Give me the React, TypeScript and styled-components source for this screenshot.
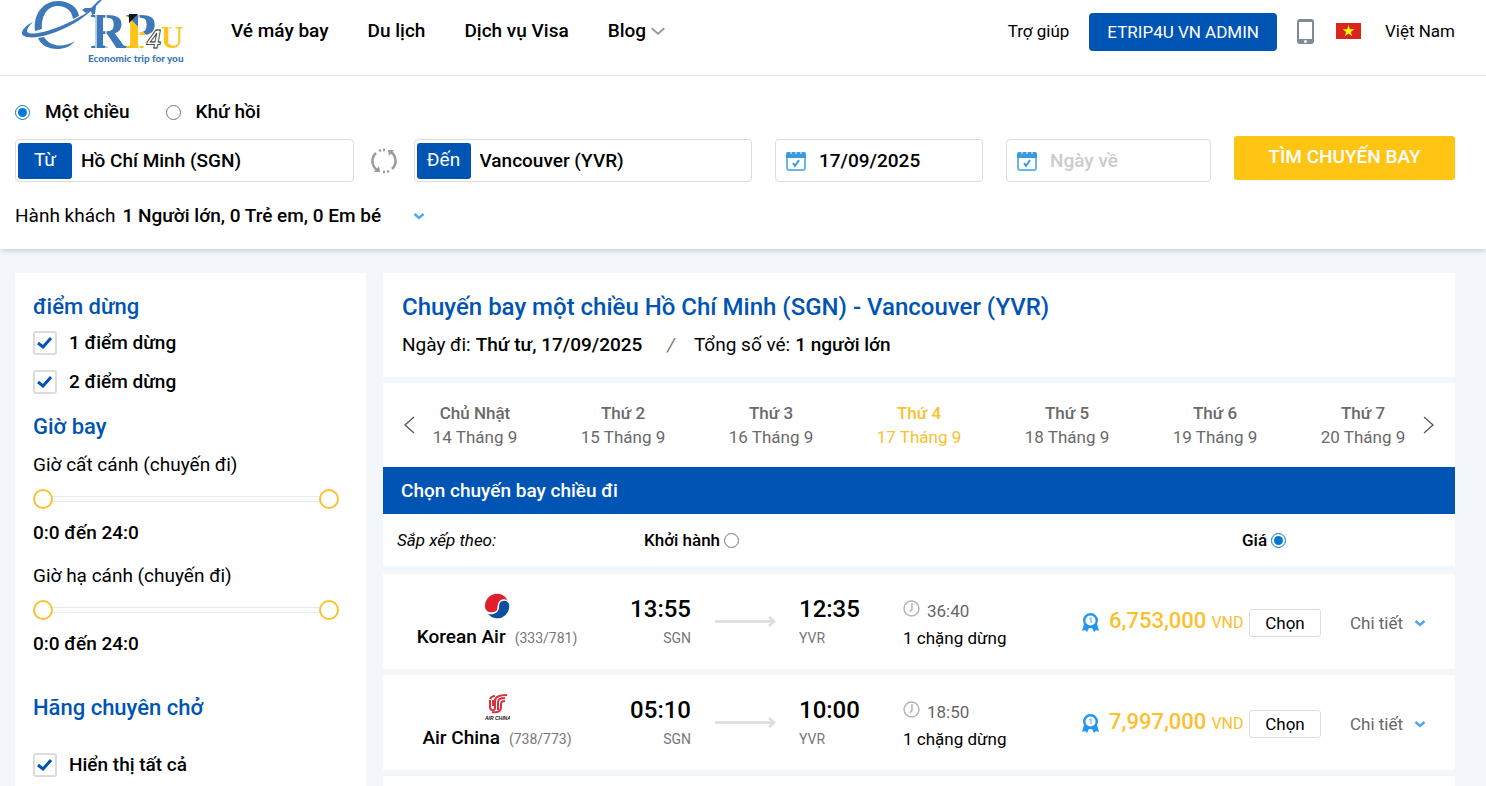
import React, { useState } from 'react';
import styled, { createGlobalStyle } from 'styled-components';

const blue = '#0054b4';
const yellow = '#ffc414';
const lineGrey = '#dcdcdc';

const GlobalStyle = createGlobalStyle`
  *, *::before, *::after { box-sizing: border-box; }
  body {
    margin: 0;
    background: #f3f7fc;
    color: #000;
    font-family: Roboto, "Open Sans", sans-serif;
    font-size: 18px;
    line-height: 24px;
  }
  button, input { font: inherit; color: inherit; }
  button { cursor: pointer; }
  svg { display: block; flex: none; }
  h1, h2, p, ul { margin: 0; padding: 0; font-weight: 400; }
`;

const Header = styled.header`
  display: flex;
  align-items: flex-start;
  height: 76px;
  padding: 0 31px 0 22px;
  background: #fff;
  border-bottom: 1px solid #e6e6e6;
  overflow: hidden;
`;

const Nav = styled.nav`
  display: flex;
  gap: 39px;
  margin-left: 44px;
  padding-top: 19px;
`;

const NavLink = styled.a`
  display: flex;
  align-items: center;
  gap: 5px;
  color: #000;
  font-size: 19px;
  font-weight: 500;
  text-decoration: none;
  white-space: nowrap;
`;

const HeaderTools = styled.div`
  display: flex;
  align-items: center;
  margin-left: auto;
  padding-top: 13px;
  font-size: 17px;
  white-space: nowrap;
`;

const HelpLink = styled.a`
  margin-right: 20px;
  padding-bottom: 3px;
  color: #000;
  text-decoration: none;
`;

const AdminButton = styled.button`
  height: 38px;
  padding: 0 18px;
  border: 0;
  border-radius: 4px;
  background: ${blue};
  color: #fff;
  margin-right: 20px;
`;

const LanguageButton = styled.button`
  display: flex;
  align-items: center;
  gap: 24px;
  margin-left: 22px;
  padding: 0 0 2px;
  border: 0;
  background: none;
`;

const SearchPanel = styled.form`
  padding: 24px 31px 21px 15px;
  background: #fff;
  box-shadow: 0 3px 5px -1px rgba(0, 0, 0, 0.17);
`;

const TripTypes = styled.div`
  display: flex;
  gap: 36px;
  height: 24px;
  margin-bottom: 12px;
`;

const TripType = styled.label`
  display: flex;
  align-items: center;
  gap: 15px;
  font-size: 19px;
  font-weight: 500;
`;

const Radio = styled.input.attrs({ type: 'radio' })`
  width: 15px;
  height: 15px;
  margin: 0;
  accent-color: #0078d4;
`;

const SearchRow = styled.div`
  display: grid;
  grid-template-columns: minmax(0, 737fr) minmax(0, 208fr) minmax(0, 205fr) minmax(0, 221fr);
  gap: 23px;
`;

const Route = styled.div`
  display: grid;
  grid-template-columns: minmax(0, 1fr) 60px minmax(0, 1fr);
  align-items: center;
`;

const Field = styled.label`
  display: flex;
  align-items: center;
  height: 43px;
  margin-top: 3px;
  padding: 2px;
  border: 1px solid ${lineGrey};
  border-radius: 4px;
  background: #fff;
`;

const FieldTag = styled.span`
  flex: none;
  width: 54px;
  height: 36px;
  border-radius: 3px;
  background: ${blue};
  color: #fff;
  font-size: 19px;
  line-height: 34px;
  text-align: center;
`;

const FieldInput = styled.input`
  flex: 1;
  min-width: 0;
  padding: 0 0 0 9px;
  border: 0;
  outline: 0;
  background: none;
  font-size: 19px;
  font-weight: 500;
  &::placeholder { color: #ccc; }
`;

const DateField = styled(Field)`
  padding-left: 10px;
  ${FieldInput} { padding-left: 13px; }
`;

const SwapButton = styled.button`
  justify-self: center;
  margin-top: 3px;
  padding: 0;
  border: 0;
  background: none;
`;

const SearchButton = styled.button`
  height: 44px;
  padding: 0 0 2px;
  border: 0;
  border-radius: 3px;
  background: ${yellow};
  color: #fff;
  font-size: 19px;
  font-weight: 500;
  white-space: nowrap;
`;

const PassengerButton = styled.button`
  display: flex;
  align-items: center;
  gap: 7px;
  margin-top: 22px;
  padding: 0;
  border: 0;
  background: none;
  font-size: 19px;
  b { font-weight: 500; margin-right: 26px; }
`;

const Content = styled.main`
  display: grid;
  grid-template-columns: 351fr 1072fr;
  gap: 17px;
  padding: 24px 31px 0 15px;
`;

const Sidebar = styled.aside`
  padding: 18px 27px 24px 18px;
  background: #fff;
`;

const FilterTitle = styled.h2<{ $space?: number }>`
  margin-top: ${(p) => p.$space ?? 0}px;
  color: ${blue};
  font-size: 22px;
  font-weight: 500;
  line-height: 32px;
`;

const CheckRow = styled.label`
  display: flex;
  align-items: center;
  gap: 12px;
  height: 39px;
  font-size: 19px;
  font-weight: 500;
`;

const CheckBox = styled.span`
  display: grid;
  place-items: center;
  svg, input { grid-area: 1 / 1; }
  svg { pointer-events: none; visibility: hidden; }
  input:checked + svg { visibility: visible; }
`;

const CheckInput = styled.input.attrs({ type: 'checkbox' })`
  appearance: none;
  width: 24px;
  height: 24px;
  margin: 0;
  border: 2px solid ${lineGrey};
  border-radius: 3px;
  background: #fff;
`;

const CarrierList = styled.div`
  margin-top: 21px;
`;

const TimeFilter = styled.div<{ $space: number }>`
  margin-top: ${(p) => p.$space}px;
  font-size: 19px;
  line-height: 27px;
  output { font-weight: 500; }
`;

const RangeTrack = styled.div`
  position: relative;
  height: 41px;
  &::before {
    content: '';
    position: absolute;
    inset: 18px 2px auto;
    height: 6px;
    border: 1px solid #e9e9e9;
    border-radius: 3px;
  }
`;

const RangeInput = styled.input.attrs({ type: 'range' })`
  position: absolute;
  inset: 0;
  width: 100%;
  height: 42px;
  margin: 0;
  appearance: none;
  background: none;
  pointer-events: none;
  &::-webkit-slider-thumb {
    appearance: none;
    width: 20px;
    height: 20px;
    border: 2px solid #f8c232;
    border-radius: 50%;
    background: #fff;
    pointer-events: auto;
  }
`;

const Results = styled.section`
  display: flex;
  flex-direction: column;
  gap: 6px;
  min-width: 0;
`;

const SummaryCard = styled.div`
  padding: 18px 19px 20px;
  background: #fff;
`;

const SummaryTitle = styled.h1`
  color: ${blue};
  font-size: 24px;
  font-weight: 500;
  line-height: 32px;
`;

const SummaryText = styled.p`
  display: flex;
  gap: 5px;
  margin-top: 10px;
  font-size: 19px;
  b { font-weight: 500; }
  i { margin: 0 14px 0 20px; color: #777; }
`;

const Chooser = styled.div`
  margin-bottom: 2px;
  background: #fff;
`;

const DateStrip = styled.div`
  position: relative;
  display: grid;
  grid-template-columns: repeat(7, 1fr);
  padding: 18px;
`;

const DayButton = styled.button<{ $active?: boolean }>`
  padding: 0;
  border: 0;
  background: none;
  color: ${(p) => (p.$active ? '#fbc02d' : '#6a6a6a')};
  font-size: 17px;
  b, span { display: block; }
  b { font-weight: 500; }
`;

const StripArrow = styled.button<{ $side: 'left' | 'right' }>`
  position: absolute;
  top: 32px;
  ${(p) => p.$side}: 20px;
  padding: 0;
  border: 0;
  background: none;
  color: #555;
`;

const DirectionBar = styled.h2`
  padding: 0 18px;
  background: ${blue};
  color: #fff;
  font-size: 19px;
  font-weight: 500;
  line-height: 47px;
`;

const SortRow = styled.div`
  display: grid;
  grid-template-columns: 247fr 598fr 199fr;
  align-items: center;
  height: 52px;
  padding: 0 14px;
  font-size: 17px;
`;

const SortOption = styled.label`
  display: flex;
  align-items: center;
  gap: 4px;
  font-weight: 500;
`;

const FlightCard = styled.article`
  display: grid;
  grid-template-columns: 228fr 80fr 108fr 104fr 179fr 167fr 101fr 105fr;
  align-items: start;
  height: 95px;
  background: #fff;
  white-space: nowrap;
`;

const Airline = styled.div`
  display: flex;
  flex-direction: column;
  align-items: center;
  padding-top: 18px;
`;

const AirlineName = styled.p`
  margin-top: 5px;
  font-size: 19px;
  font-weight: 500;
  span { margin-left: 9px; color: #777; font-size: 14px; font-weight: 400; }
`;

const Stop = styled.div<{ $end?: boolean }>`
  padding-top: 21px;
  text-align: ${(p) => (p.$end ? 'right' : 'left')};
`;

const StopTime = styled.p`
  font-size: 24px;
  font-weight: 500;
  line-height: 28px;
`;

const StopCode = styled.p`
  margin-top: 3px;
  color: #777;
  font-size: 14px;
`;

const ArrowCell = styled.div`
  padding-top: 42px;
  justify-self: center;
`;

const Duration = styled.div`
  padding-top: 24px;
  font-size: 17px;
  line-height: 27px;
`;

const DurationTime = styled.p`
  display: flex;
  gap: 7px;
  color: #666;
  svg { margin-top: 2px; }
`;

const Price = styled.p`
  display: flex;
  align-items: baseline;
  gap: 10px;
  padding-top: 35px;
  color: #fbc02d;
  font-size: 22px;
  b { font-weight: 500; }
  svg { align-self: center; }
  small { margin-left: -5px; font-size: 16px; }
`;

const ChooseButton = styled.button`
  justify-self: start;
  height: 28px;
  width: 72px;
  margin-top: 35px;
  padding: 0;
  border: 1px solid ${lineGrey};
  border-radius: 3px;
  background: #fff;
  font-size: 17px;
`;

const DetailButton = styled.button`
  display: flex;
  align-items: center;
  gap: 12px;
  margin-top: 37px;
  padding: 0;
  border: 0;
  background: none;
  color: #666;
  font-size: 17px;
`;

const Logo = () => (
  <svg width="165" height="70" viewBox="22 0 165 70" role="img" aria-label="ETRIP4U">
    <defs>
      <linearGradient id="stem" gradientUnits="userSpaceOnUse" x1="137" y1="28" x2="139" y2="26">
        <stop offset="0.5" stopColor="#fcc419" />
        <stop offset="0.5" stopColor="#3d78b8" />
      </linearGradient>
    </defs>
    <path d="M35 31C33 13 44 1 58 1c12 0 20 7 21 15l-6 3C72 11 66 6 58 6 47 6 41 16 42 29z" fill="#3d78b8" />
    <path d="M38 38l6-1c6 10 20 11 31 4-5 6-11 8-18 8-9 0-16-4-19-11z" fill="#3d78b8" />
    <path d="M33 22c-7 3-12 9-11 12 2 5 16 4 28 0 16-5 32-14 43-25-13 8-27 16-43 21-12 4-22 5-23 1 0-3 3-6 6-9z" fill="#3d78b8" />
    <path d="M82 10l3-2h6l7-7 6-3-8 8-1 8-3 1-1-4-5 2z" fill="#3d78b8" />
    <text x="90" y="48" fontFamily="Liberation Serif, serif" fontWeight="700" fontSize="51" fill="#3d78b8">
      R
      <tspan x="125" fill="url(#stem)">P</tspan>
      <tspan x="147" fontFamily="Liberation Sans, sans-serif" fontWeight="700" fontStyle="italic" fontSize="25" fill="#fff" stroke="#222" strokeWidth="0.800">4</tspan>
      <tspan x="161" fontSize="31" fill="#fcc419">U</tspan>
    </text>
    <path d="M96 13v36M106 13v36M139 13v36M169 27v17" stroke="#fff" strokeWidth="1.200" />
    <path d="M129 14h9l-9 9z" fill="#111" />
    <text x="88" y="62" fontFamily="Lato, sans-serif" fontWeight="900" fontSize="10" fill="#3d78b8">Economic trip for you</text>
  </svg>
);

const Chevron = ({ color = '#4aa8ea', size = 10, stroke = 2.4 }: { color?: string; size?: number; stroke?: number }) => (
  <svg width={size} height={size} viewBox="0 0 10 10" fill="none" stroke={color} strokeWidth={stroke}>
    <path d="M0.500 3L5 7l4.500-4" />
  </svg>
);

const PhoneIcon = () => (
  <svg width="17" height="27" viewBox="0 0 17 27">
    <rect width="17" height="25" y="0" rx="3" fill="#7d8b99" />
    <rect x="2" y="3" width="13" height="17" fill="#fff" />
    <circle cx="8.500" cy="22.500" r="1.500" fill="#fff" />
  </svg>
);

const Flag = () => (
  <svg width="25" height="16" viewBox="0 0 25 16">
    <rect width="25" height="16" fill="#da251d" />
    <path d="M12.500 2l1.400 4.300h4.500l-3.600 2.700 1.400 4.300-3.700-2.700-3.700 2.700 1.400-4.300-3.600-2.700h4.500z" fill="#ff0" />
  </svg>
);

const SwapIcon = () => (
  <svg width="26" height="26" viewBox="0 0 26 26" fill="none" stroke="#9b9b9b" strokeWidth="2.500">
    <path d="M6 22A11 11 0 0 1 5 5" />
    <path d="M20 4a11 11 0 0 1 1 17" />
    <path d="M3 24h6l-1-6zM23 2h-6l1 6z" fill="#9b9b9b" stroke="none" />
    <path d="M8 3l2-1M12 2h2M12 24h2M16 24l2-1" />
  </svg>
);

const CalendarIcon = () => (
  <svg width="20" height="20" viewBox="0 0 20 20">
    <rect x="1" y="3" width="18" height="16" rx="2" fill="#fff" stroke="#6db6ea" strokeWidth="2" />
    <path d="M0 3a2 2 0 0 1 2-2h16a2 2 0 0 1 2 2v4H0z" fill="#3a9bdf" />
    <path d="M5 0v3M10 0v3M15 0v3" stroke="#fff" strokeWidth="1" />
    <path d="M7 12l2 3 4-6" fill="none" stroke="#3a9bdf" strokeWidth="2" />
  </svg>
);

const CheckMark = () => (
  <svg width="16" height="12" viewBox="0 0 16 12" fill="none" stroke={blue} strokeWidth="3">
    <path d="M1 6l5 4 8-9" />
  </svg>
);

const ClockIcon = () => (
  <svg width="17" height="17" viewBox="0 0 17 17" fill="none" stroke="#b5b5b5" strokeWidth="1.500">
    <circle cx="8.500" cy="8.500" r="7.500" />
    <path d="M9 3v6l-2 3" />
  </svg>
);

const BadgeIcon = () => (
  <svg width="17" height="19" viewBox="0 0 17 19">
    <path d="M2 11l-2 7 3-1 2 2 2-4h3l2 4 2-2 3 1-2-7z" fill="#2196f3" />
    <circle cx="8.500" cy="7.500" r="6.300" fill="#fff" stroke="#2196f3" strokeWidth="2.400" />
    <path d="M7.500 6l1.500-1v5" fill="none" stroke="#6cb8f5" strokeWidth="1.200" />
  </svg>
);

const LongArrow = () => (
  <svg width="61" height="11" viewBox="0 0 61 11" fill="none" stroke="#dcdcdc" strokeWidth="2.500">
    <path d="M0 5.500h59M54 1l5 4.500-5 4.500" />
  </svg>
);

const KoreanAirLogo = () => (
  <svg width="26" height="28" viewBox="0 0 26 28">
    <path d="M1 14A12 12 0 0 1 24 9c-3-3-9-2-10 3-1 4 0 8-5 8-5 1-8-2-8-6z" fill="#e01f2d" />
    <path d="M25 12A12 12 0 0 1 4 22c6 1 10-1 11-6 0-4 1-7 4-7 3-1 5 1 6 3z" fill="#0b4fa3" />
  </svg>
);

const AirChinaLogo = () => (
  <svg width="26" height="28" viewBox="0 0 26 28">
    <g fill="none" stroke="#d8323f" strokeWidth="2">
      <path d="M6 7v7c0 4 5 4 5 1V8c0-4 4-6 12-6" />
      <path d="M9 7v6M14 17V9c0-3 3-4 7-4M8 19c6 1 9-1 9-5v-3c0-2 1-3 4-3" />
      <path d="M6 6c1-2 3-3 5-3" />
    </g>
    <text x="1" y="27" fontFamily="Liberation Sans, sans-serif" fontWeight="700" fontStyle="italic" fontSize="5" fill="#111">AIR CHINA</text>
  </svg>
);

const SideArrow = ({ side }: { side: 'left' | 'right' }) => (
  <svg width="12" height="20" viewBox="0 0 12 20" fill="none" stroke="currentColor" strokeWidth="1.300">
    <path d={side === 'left' ? 'M11 2L2 10l9 8' : 'M1 2l9 8-9 8'} />
  </svg>
);

const days = [
  ['Chủ Nhật', '14 Tháng 9'],
  ['Thứ 2', '15 Tháng 9'],
  ['Thứ 3', '16 Tháng 9'],
  ['Thứ 4', '17 Tháng 9'],
  ['Thứ 5', '18 Tháng 9'],
  ['Thứ 6', '19 Tháng 9'],
  ['Thứ 7', '20 Tháng 9'],
];

const flights = [
  { airline: 'Korean Air', plane: '333/781', logo: <KoreanAirLogo />, depart: '13:55', arrive: '12:35', duration: '36:40', price: '6,753,000' },
  { airline: 'Air China', plane: '738/773', logo: <AirChinaLogo />, depart: '05:10', arrive: '10:00', duration: '18:50', price: '7,997,000' },
];

const Check = ({ label }: { label: string }) => (
  <CheckRow>
    <CheckBox>
      <CheckInput defaultChecked />
      <CheckMark />
    </CheckBox>
    {label}
  </CheckRow>
);

const TimeRange = ({ label, space }: { label: string; space: number }) => {
  const [from, setFrom] = useState(0);
  const [to, setTo] = useState(24);
  return (
    <TimeFilter $space={space}>
      <div>{label}</div>
      <RangeTrack>
        <RangeInput aria-label={`${label} từ`} min={0} max={24} value={from} onChange={(e) => setFrom(Math.min(+e.target.value, to))} />
        <RangeInput aria-label={`${label} đến`} min={0} max={24} value={to} onChange={(e) => setTo(Math.max(+e.target.value, from))} />
      </RangeTrack>
      <output>{`${from}:0 đến ${to}:0`}</output>
    </TimeFilter>
  );
};

export default function App() {
  const [day, setDay] = useState(3);
  return (
    <>
      <GlobalStyle />
      <Header>
        <Logo />
        <Nav>
          <NavLink href="#ve">Vé máy bay</NavLink>
          <NavLink href="#du-lich">Du lịch</NavLink>
          <NavLink href="#visa">Dịch vụ Visa</NavLink>
          <NavLink href="#blog">
            Blog
            <Chevron color="#999" size={14} stroke={1.3} />
          </NavLink>
        </Nav>
        <HeaderTools>
          <HelpLink href="#help">Trợ giúp</HelpLink>
          <AdminButton type="button">ETRIP4U VN ADMIN</AdminButton>
          <PhoneIcon />
          <LanguageButton type="button">
            <Flag />
            Việt Nam
          </LanguageButton>
        </HeaderTools>
      </Header>

      <SearchPanel onSubmit={(e) => e.preventDefault()}>
        <TripTypes>
          <TripType>
            <Radio name="trip" defaultChecked />
            Một chiều
          </TripType>
          <TripType>
            <Radio name="trip" />
            Khứ hồi
          </TripType>
        </TripTypes>
        <SearchRow>
          <Route>
            <Field>
              <FieldTag>Từ</FieldTag>
              <FieldInput defaultValue="Hồ Chí Minh (SGN)" />
            </Field>
            <SwapButton type="button" aria-label="Đổi chiều">
              <SwapIcon />
            </SwapButton>
            <Field>
              <FieldTag>Đến</FieldTag>
              <FieldInput defaultValue="Vancouver (YVR)" />
            </Field>
          </Route>
          <DateField>
            <CalendarIcon />
            <FieldInput aria-label="Ngày đi" defaultValue="17/09/2025" />
          </DateField>
          <DateField>
            <CalendarIcon />
            <FieldInput aria-label="Ngày về" placeholder="Ngày về" />
          </DateField>
          <SearchButton type="submit">TÌM CHUYẾN BAY</SearchButton>
        </SearchRow>
        <PassengerButton type="button">
          Hành khách <b>1 Người lớn, 0 Trẻ em, 0 Em bé</b>
          <Chevron />
        </PassengerButton>
      </SearchPanel>

      <Content>
        <Sidebar>
          <FilterTitle>điểm dừng</FilterTitle>
          <Check label="1 điểm dừng" />
          <Check label="2 điểm dừng" />
          <FilterTitle $space={10}>Giờ bay</FilterTitle>
          <TimeRange label="Giờ cất cánh (chuyến đi)" space={8} />
          <TimeRange label="Giờ hạ cánh (chuyến đi)" space={16} />
          <FilterTitle $space={35}>Hãng chuyên chở</FilterTitle>
          <CarrierList>
            <Check label="Hiển thị tất cả" />
          </CarrierList>
        </Sidebar>

        <Results>
          <SummaryCard>
            <SummaryTitle>Chuyến bay một chiều Hồ Chí Minh (SGN) - Vancouver (YVR)</SummaryTitle>
            <SummaryText>
              Ngày đi: <b>Thứ tư, 17/09/2025</b>
              <i>/</i>
              Tổng số vé: <b>1 người lớn</b>
            </SummaryText>
          </SummaryCard>

          <Chooser>
            <DateStrip>
              <StripArrow type="button" $side="left" aria-label="Tuần trước">
                <SideArrow side="left" />
              </StripArrow>
              {days.map(([name, date], i) => (
                <DayButton key={name} type="button" $active={i === day} onClick={() => setDay(i)}>
                  <b>{name}</b>
                  <span>{date}</span>
                </DayButton>
              ))}
              <StripArrow type="button" $side="right" aria-label="Tuần sau">
                <SideArrow side="right" />
              </StripArrow>
            </DateStrip>
            <DirectionBar>Chọn chuyến bay chiều đi</DirectionBar>
            <SortRow>
              <em>Sắp xếp theo:</em>
              <SortOption>
                Khởi hành
                <Radio name="sort" />
              </SortOption>
              <SortOption>
                Giá
                <Radio name="sort" defaultChecked />
              </SortOption>
            </SortRow>
          </Chooser>

          {flights.map((f) => (
            <FlightCard key={f.airline}>
              <Airline>
                {f.logo}
                <AirlineName>
                  {f.airline}
                  <span>({f.plane})</span>
                </AirlineName>
              </Airline>
              <Stop $end>
                <StopTime>{f.depart}</StopTime>
                <StopCode>SGN</StopCode>
              </Stop>
              <ArrowCell>
                <LongArrow />
              </ArrowCell>
              <Stop>
                <StopTime>{f.arrive}</StopTime>
                <StopCode>YVR</StopCode>
              </Stop>
              <Duration>
                <DurationTime>
                  <ClockIcon />
                  {f.duration}
                </DurationTime>
                1 chặng dừng
              </Duration>
              <Price>
                <BadgeIcon />
                <b>{f.price}</b>
                <small>VND</small>
              </Price>
              <ChooseButton type="button">Chọn</ChooseButton>
              <DetailButton type="button">
                Chi tiết
                <Chevron />
              </DetailButton>
            </FlightCard>
          ))}
          <FlightCard />
        </Results>
      </Content>
    </>
  );
}
